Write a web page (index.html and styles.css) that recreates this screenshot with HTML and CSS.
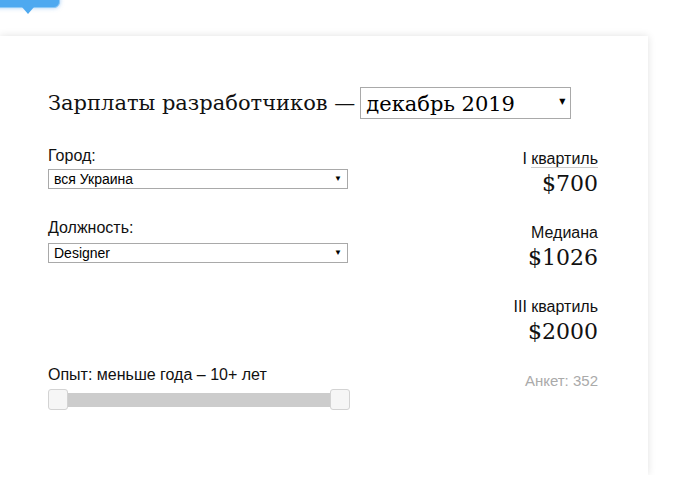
FILE: index.html
```html
<!DOCTYPE html>
<html lang="ru">
<head>
    <meta charset="UTF-8">
    <meta name="viewport" content="width=device-width, initial-scale=1.0">
    <title>Зарплаты разработчиков</title>
    <link rel="stylesheet" href="styles.css">
</head>
<body>
    <div class="tooltip"></div>
    <div class="card">
        <h1 class="title">Зарплаты разработчиков —
            <span class="select select-big">
                <select id="period">
                    <option>декабрь 2019</option>
                </select>
            </span>
        </h1>
        <div class="columns">
            <div class="filters">
                <label class="label" for="city">Город:</label>
                <span class="select">
                    <select id="city">
                        <option>вся Украина</option>
                    </select>
                </span>

                <label class="label label-gap" for="position">Должность:</label>
                <span class="select">
                    <select id="position">
                        <option>Designer</option>
                    </select>
                </span>

                <div class="label label-exp">Опыт: меньше года – 10+ лет</div>
                <div class="slider">
                    <span class="handle"></span>
                    <span class="track"></span>
                    <span class="handle"></span>
                </div>
            </div>
            <div class="stats">
                <div class="stat">
                    <div class="stat-name">I <abbr>квартиль</abbr></div>
                    <div class="stat-value">$700</div>
                </div>
                <div class="stat">
                    <div class="stat-name">Медиана</div>
                    <div class="stat-value">$1026</div>
                </div>
                <div class="stat">
                    <div class="stat-name">III квартиль</div>
                    <div class="stat-value">$2000</div>
                </div>
                <div class="count">Анкет: 352</div>
            </div>
        </div>
    </div>
</body>
</html>
```

FILE: styles.css
```css
body {
    margin: 0;
    padding: 0;
    font-family: "Liberation Sans", Arial, sans-serif;
    color: #111;
    background: #fff;
}
.tooltip {
    position: absolute;
    left: -20px;
    top: -20px;
    width: 78px;
    height: 26px;
    background: #4ea9f0;
    border: 1px solid #8dc9f6;
    border-radius: 6px;
    box-shadow: 0 0 4px rgba(80, 160, 240, 0.5);
}
.tooltip::after {
    content: "";
    position: absolute;
    left: 41px;
    bottom: -7px;
    border-left: 6px solid transparent;
    border-right: 6px solid transparent;
    border-top: 7px solid #4ea9f0;
}
.card {
    width: 550px;
    height: 439px;
    margin-top: 36px;
    padding: 0 50px 0 48px;
    box-sizing: content-box;
    background: #fff;
    box-shadow: 0 0 8px rgba(0, 0, 0, 0.12);
}
.title {
    margin: 0;
    padding-top: 51px;
    font-family: "DejaVu Serif", Georgia, serif;
    font-weight: normal;
    font-size: 21px;
    line-height: 31px;
    display: flex;
    align-items: center;
    gap: 5px;
}
.select {
    position: relative;
    display: block;
    width: 300px;
}
.select select {
    appearance: none;
    -webkit-appearance: none;
    display: block;
    width: 100%;
    height: 20px;
    margin: 0;
    padding: 0 5px;
    border: 1px solid #a9a9a9;
    border-radius: 0;
    background: #fff;
    font-family: "Liberation Sans", Arial, sans-serif;
    font-size: 14px;
    color: #000;
}
.select::after {
    content: "▼";
    position: absolute;
    right: 6px;
    top: 6px;
    font-size: 8px;
    line-height: 8px;
    color: #000;
    pointer-events: none;
}
.select-big {
    width: 211px;
}
.select-big select {
    height: 32px;
    font-family: "DejaVu Serif", Georgia, serif;
    font-size: 21px;
    padding: 2px 5px 0;
}
.select-big::after {
    top: 11px;
    right: 6px;
}
.columns {
    display: flex;
    justify-content: space-between;
    margin-top: 28px;
}
.filters {
    width: 300px;
}
.label {
    display: block;
    font-size: 16px;
    line-height: 18px;
    margin-bottom: 4px;
}
.label-gap {
    margin-top: 30px;
    margin-bottom: 6px;
}
.label-exp {
    margin-top: 103px;
    margin-bottom: 5px;
}
.slider {
    display: flex;
    align-items: center;
    width: 302px;
}
.track {
    flex: 1;
    height: 14px;
    background: #ccc;
}
.handle {
    width: 18px;
    height: 19px;
    background: #f6f6f6;
    border: 1px solid #d3d3d3;
    border-radius: 3px;
}
.stats {
    text-align: right;
    padding-top: 3px;
}
.stat {
    margin-bottom: 24px;
}
.stat-name {
    font-size: 16px;
    line-height: 18px;
}
.stat-name abbr {
    text-decoration: none;
    border-bottom: 1px solid #ccc;
}
.stat-value {
    font-family: "DejaVu Serif", Georgia, serif;
    font-size: 22px;
    line-height: 32px;
}
.count {
    font-size: 15px;
    line-height: 18px;
    color: #aaa;
}
```
